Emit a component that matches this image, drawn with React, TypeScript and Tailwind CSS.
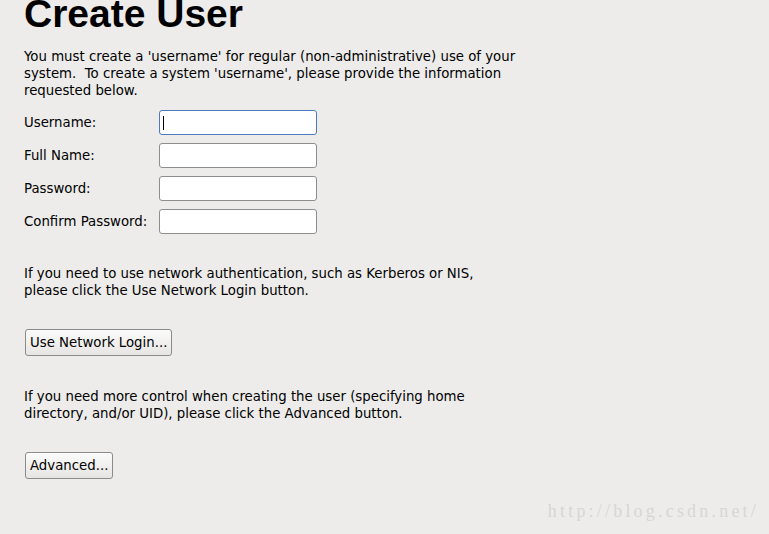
import React from 'react';

const fields = ['Username:', 'Full Name:', 'Password:', 'Confirm Password:'];

const GtkButton = ({ label }: { label: string }) => (
  <button
    type="button"
    className="h-[27px] px-[4px] rounded-[3px] border border-[#8b8b8b] bg-gradient-to-b from-[#fbfbfb] to-[#e6e5e3] text-[13.3px] leading-none text-black"
  >
    {label}
  </button>
);

const App = () => {
  return (
    <div
      className="relative w-[769px] h-[534px] overflow-hidden bg-[#edeceb] text-black"
      style={{ fontFamily: '"DejaVu Sans", sans-serif' }}
    >
      <div className="px-[24px]">
        <h1
          className="mt-[-6px] text-[39px] leading-none font-bold"
          style={{ fontFamily: '"Liberation Sans", Arial, sans-serif' }}
        >
          Create User
        </h1>

        <p className="mt-[15px] w-[520px] text-[13.3px] leading-[17px]">
          You must create a 'username' for regular (non-administrative) use of your
          <br />
          system.&nbsp; To create a system 'username', please provide the information
          <br />
          requested below.
        </p>

        <div className="mt-[11px] flex flex-col gap-[8px]">
          {fields.map((f, i) => (
            <div key={f} className="flex items-center">
              <label className="w-[135px] text-[13.3px]">{f}</label>
              <div
                className={`relative w-[158px] h-[25px] rounded-[3px] bg-white border ${
                  i === 0 ? 'border-[#4b7bbd]' : 'border-[#8e8e8e]'
                }`}
              >
                {i === 0 && (
                  <span className="absolute left-[3px] top-[5px] w-px h-[14px] bg-black" />
                )}
              </div>
            </div>
          ))}
        </div>

        <p className="mt-[31px] text-[13.3px] leading-[17px]">
          If you need to use network authentication, such as Kerberos or NIS,
          <br />
          please click the Use Network Login button.
        </p>

        <div className="mt-[30px] pl-px">
          <GtkButton label="Use Network Login..." />
        </div>

        <p className="mt-[32px] text-[13.3px] leading-[17px]">
          If you need more control when creating the user (specifying home
          <br />
          directory, and/or UID), please click the Advanced button.
        </p>

        <div className="mt-[30px] pl-px">
          <GtkButton label="Advanced..." />
        </div>
      </div>

      <div
        className="absolute right-[10px] bottom-[9px] text-[18px] tracking-[3.2px] text-[#d8d6d3]"
        style={{ fontFamily: '"Liberation Serif", serif' }}
      >
        http://blog.csdn.net/
      </div>
    </div>
  );
};

export default App;
